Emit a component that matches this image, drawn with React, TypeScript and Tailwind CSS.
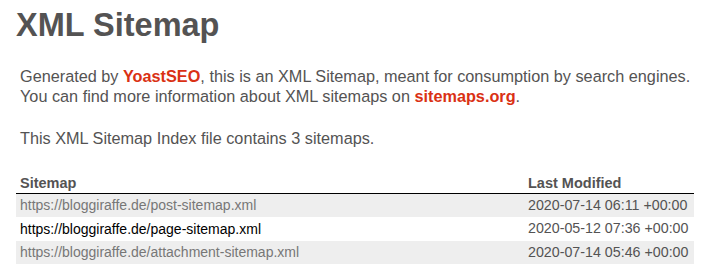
const sitemaps = [
  {
    url: 'https://bloggiraffe.de/post-sitemap.xml',
    modified: '2020-07-14 06:11 +00:00',
    row: 'h-[23px] bg-[#eeeeee]',
    link: 'text-[#777777]',
  },
  {
    url: 'https://bloggiraffe.de/page-sitemap.xml',
    modified: '2020-05-12 07:36 +00:00',
    row: 'h-[24px] bg-white',
    link: 'text-black',
  },
  {
    url: 'https://bloggiraffe.de/attachment-sitemap.xml',
    modified: '2020-07-14 05:46 +00:00',
    row: 'h-[23px] bg-[#eeeeee]',
    link: 'text-[#777777]',
  },
];

export default function App() {
  return (
    <div className="min-h-[279px] bg-white px-4 font-['Liberation_Sans',Arial,sans-serif] text-[#545353]">
      <h1 className="pt-[7px] text-[32.5px] leading-[36px] font-bold">XML Sitemap</h1>

      <div className="mt-[23px] ml-[4px] text-[16.25px] leading-[20px]">
        <p>
          Generated by{' '}
          <a href="#" className="font-bold text-[#da3114]">
            YoastSEO
          </a>
          , this is an XML Sitemap, meant for consumption by search engines.
          <br />
          You can find more information about XML sitemaps on{' '}
          <a href="#" className="font-bold text-[#da3114]">
            sitemaps.org
          </a>
          .
        </p>
        <p className="mt-[22px]">This XML Sitemap Index file contains 3 sitemaps.</p>
      </div>

      <div className="mt-[24px] w-[678px] text-[14px]">
        <div className="grid grid-cols-[1fr_170px] border-b border-black pt-[1px] text-[14.5px] leading-[20px] font-bold">
          <div className="pl-[4px]">Sitemap</div>
          <div className="pl-[4px]">Last Modified</div>
        </div>
        {sitemaps.map((s) => (
          <div key={s.url} className={`grid grid-cols-[1fr_170px] items-center ${s.row}`}>
            <div className="pl-[4px]">
              <a href="#" className={s.link}>
                {s.url}
              </a>
            </div>
            <div className="pl-[4px] text-[14.25px]">{s.modified}</div>
          </div>
        ))}
      </div>
    </div>
  );
}
